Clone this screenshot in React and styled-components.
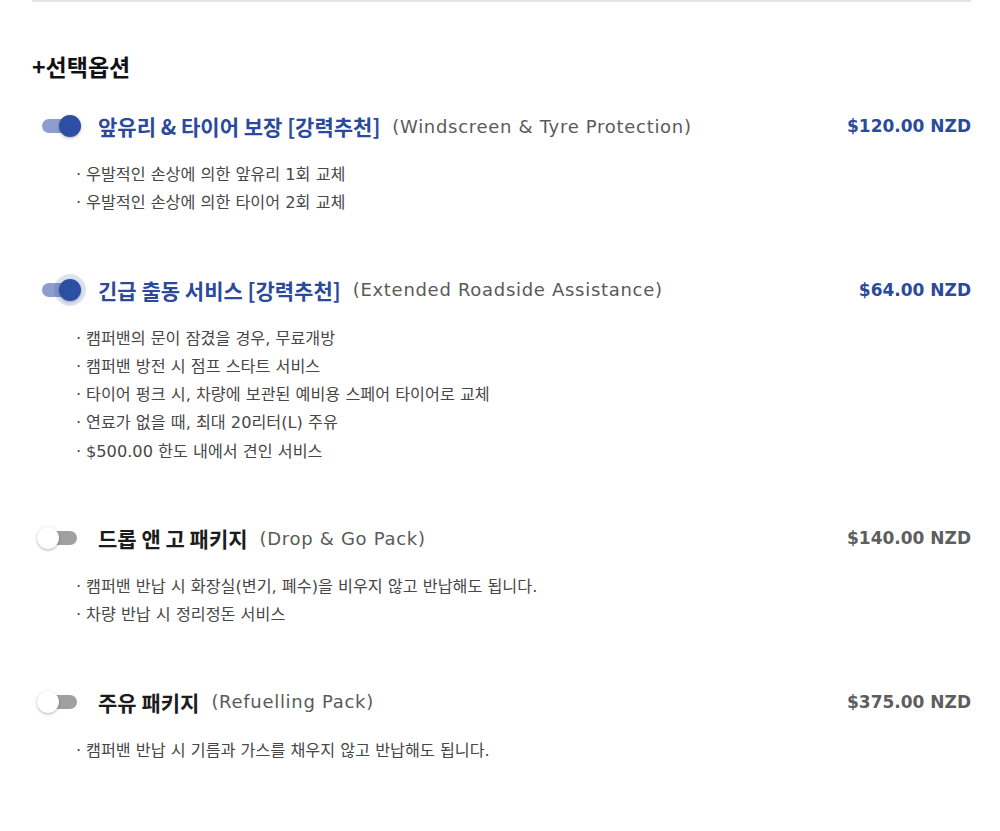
import styled, { createGlobalStyle, css } from "styled-components";

const GlobalStyle = createGlobalStyle`
  body {
    margin: 0;
    background: #ffffff;
    font-family: "DejaVu Sans", "Noto Sans CJK KR", sans-serif;
  }
`;

const options = [
  {
    id: "windscreen",
    title: "앞유리 & 타이어 보장 [강력추천]",
    english: "(Windscreen & Tyre Protection)",
    price: "$120.00 NZD",
    on: true,
    items: ["우발적인 손상에 의한 앞유리 1회 교체", "우발적인 손상에 의한 타이어 2회 교체"],
  },
  {
    id: "roadside",
    title: "긴급 출동 서비스 [강력추천]",
    english: "(Extended Roadside Assistance)",
    price: "$64.00 NZD",
    on: true,
    focus: true,
    items: [
      "캠퍼밴의 문이 잠겼을 경우, 무료개방",
      "캠퍼밴 방전 시 점프 스타트 서비스",
      "타이어 펑크 시, 차량에 보관된 예비용 스페어 타이어로 교체",
      "연료가 없을 때, 최대 20리터(L) 주유",
      "$500.00 한도 내에서 견인 서비스",
    ],
  },
  {
    id: "dropgo",
    title: "드롭 앤 고 패키지",
    english: "(Drop & Go Pack)",
    price: "$140.00 NZD",
    on: false,
    items: ["캠퍼밴 반납 시 화장실(변기, 폐수)을 비우지 않고 반납해도 됩니다.", "차량 반납 시 정리정돈 서비스"],
  },
  {
    id: "refuel",
    title: "주유 패키지",
    english: "(Refuelling Pack)",
    price: "$375.00 NZD",
    on: false,
    items: ["캠퍼밴 반납 시 기름과 가스를 채우지 않고 반납해도 됩니다."],
  },
];

export default function App() {
  return (
    <>
      <GlobalStyle />
      <Page>
        <Divider />
        <Heading>+선택옵션</Heading>
        <List>
          {options.map((o) => (
            <Option key={o.id}>
              <Row>
                <Switch>
                  <Track on={o.on} />
                  <Thumb on={o.on} focus={o.focus} />
                </Switch>
                <Title on={o.on}>{o.title}</Title>
                <English>{o.english}</English>
                <Price on={o.on}>{o.price}</Price>
              </Row>
              <Bullets>
                {o.items.map((t) => (
                  <Bullet key={t}>{t}</Bullet>
                ))}
              </Bullets>
            </Option>
          ))}
        </List>
      </Page>
    </>
  );
}

const Page = styled.div`
  margin: 0 29px 0 32px;
`;

const Divider = styled.div`
  height: 2px;
  background: #e4e4e4;
`;

const Heading = styled.h2`
  margin: 49px 0 26px;
  font-family: "Noto Sans CJK KR", sans-serif;
  font-size: 23px;
  line-height: 30px;
  font-weight: 700;
  color: #111111;
`;

const List = styled.div`
  display: flex;
  flex-direction: column;
  gap: 53px;
`;

const Option = styled.section``;

const Row = styled.div`
  display: flex;
  align-items: center;
  height: 38px;
`;

const Switch = styled.span`
  position: relative;
  flex: none;
  width: 44px;
  height: 22px;
  margin: 0 17px 0 5px;
`;

const Track = styled.span`
  position: absolute;
  left: 5px;
  top: 4px;
  width: 35px;
  height: 14px;
  border-radius: 7px;
  background: ${(p) => (p.on ? "#8d9dd0" : "#a0a0a0")};
`;

const Thumb = styled.span`
  position: absolute;
  top: 0;
  left: ${(p) => (p.on ? "22px" : "0")};
  width: 22px;
  height: 22px;
  border-radius: 50%;
  background: ${(p) => (p.on ? "#2c4ea3" : "#ffffff")};
  box-shadow: 0 1px 3px rgba(0, 0, 0, 0.3);
  ${(p) =>
    p.focus &&
    css`
      box-shadow: 0 1px 3px rgba(0, 0, 0, 0.3), 0 0 0 5px rgba(44, 78, 163, 0.16);
    `}
`;

const Title = styled.span`
  font-family: "Noto Sans CJK KR", sans-serif;
  font-size: 21px;
  font-weight: 700;
  color: ${(p) => (p.on ? "#2b4a9c" : "#1c1c1c")};
  white-space: nowrap;
`;

const English = styled.span`
  margin-left: 12px;
  font-size: 18px;
  letter-spacing: 0.7px;
  font-weight: 400;
  color: #5a5a5a;
  white-space: nowrap;
`;

const Price = styled.span`
  margin-left: auto;
  font-size: 17px;
  font-weight: 700;
  color: ${(p) => (p.on ? "#2b4a9c" : "#5e5e5e")};
  white-space: nowrap;
`;

const Bullets = styled.ul`
  list-style: none;
  margin: 16px 0 0;
  padding: 0 0 0 44px;
`;

const Bullet = styled.li`
  font-size: 16.2px;
  line-height: 28.3px;
  color: #474747;

  &::before {
    content: "·";
    display: inline-block;
    width: 10px;
  }
`;
